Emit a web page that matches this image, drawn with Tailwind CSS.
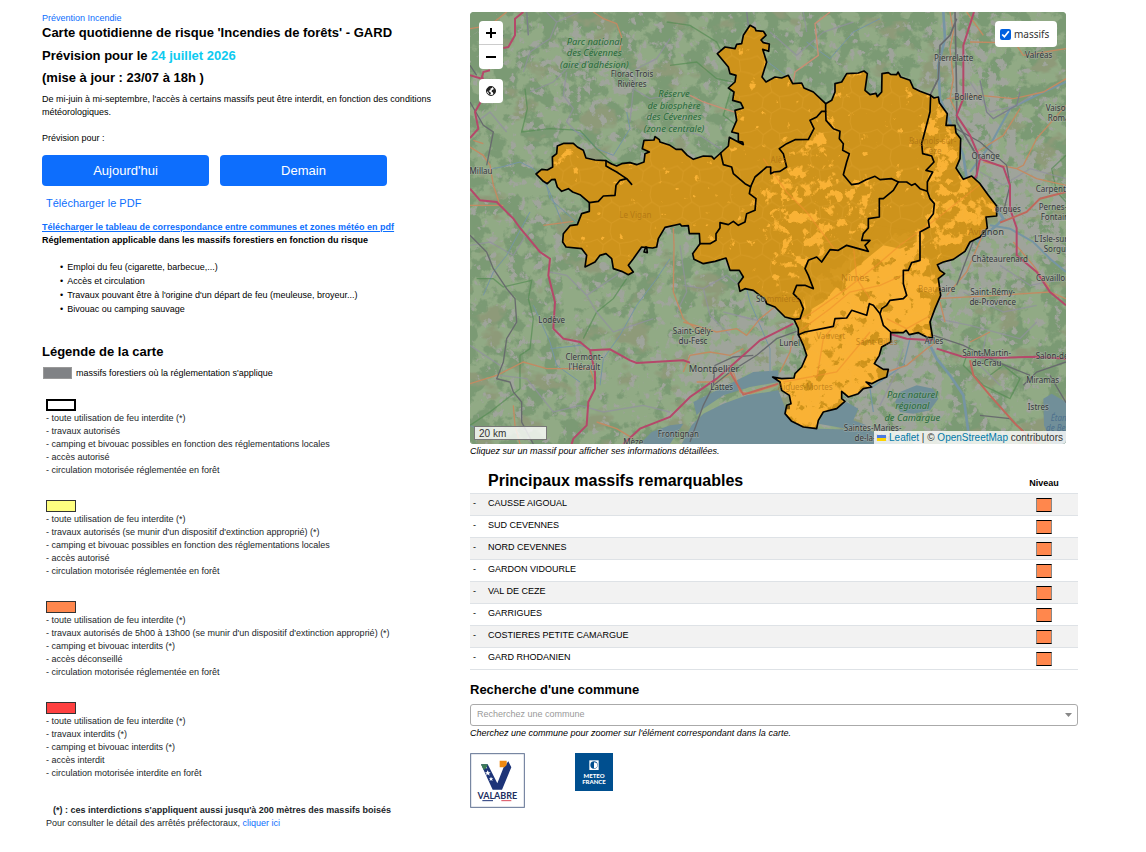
<!doctype html>
<html lang="fr">

<head>
  <meta charset="UTF-8" />
  <meta name="viewport" content="width=device-width,initial-scale=1" />
  <title>Prévention Incendie - GARD</title>
  <script src="https://cdn.jsdelivr.net/npm/@tailwindcss/browser@4"></script>
</head>

<body class="bg-white font-['Liberation_Sans',sans-serif] text-[9px] leading-[13px] text-black">
  <main class="grid grid-cols-[428fr_608fr] pt-3 pr-[68px] pl-[42px]">

    <!-- Left column: forecast, rules and legend -->
    <section class="pr-4">
      <a href="#" class="block text-[#0d6efd]">Prévention Incendie</a>
      <div class="-mt-[3px] text-[13px] leading-[22px] font-bold">
        <h1>Carte quotidienne de risque 'Incendies de forêts' - GARD</h1>
        <h2 class="pt-px">Prévision pour le <span class="text-[#0dcaf0]">24 juillet 2026</span></h2>
        <h2>(mise à jour : 23/07 à 18h )</h2>
      </div>
      <p class="mt-1">De mi-juin à mi-septembre, l'accès à certains massifs peut être interdit, en fonction des conditions météorologiques.</p>
      <p class="mt-[13px]">Prévision pour :</p>
      <div class="mt-[10px] flex gap-[11px]">
        <button type="button" class="h-[31px] w-[167px] rounded bg-[#0d6efd] text-[13px] text-white">Aujourd'hui</button>
        <button type="button" class="h-[31px] w-[167px] rounded bg-[#0d6efd] text-[13px] text-white">Demain</button>
      </div>
      <a href="#" class="mt-2 block pl-1 text-[11px] leading-[18px] text-[#0d6efd]">Télécharger le PDF</a>
      <div class="mt-[9px] font-bold">
        <a href="#" class="text-[#0d6efd] underline">Télécharger le tableau de correspondance entre communes et zones météo en pdf</a>
        <p>Réglementation applicable dans les massifs forestiers en fonction du risque</p>
      </div>
      <ul class="mt-[13px] pl-[18px] leading-[14px]">
        <li class="before:mr-1 before:content-['•']">Emploi du feu (cigarette, barbecue,...)</li>
        <li class="before:mr-1 before:content-['•']">Accès et circulation</li>
        <li class="before:mr-1 before:content-['•']">Travaux pouvant être à l'origine d'un départ de feu (meuleuse, broyeur...)</li>
        <li class="before:mr-1 before:content-['•']">Bivouac ou camping sauvage</li>
      </ul>

      <h3 class="mt-[27px] text-[13px] leading-[18px] font-bold">Légende de la carte</h3>
      <div class="mt-[3px] flex items-center gap-1 leading-[18px]">
        <span class="ml-px h-3 w-[29px] border border-[#999] bg-[#808285]"></span>
        massifs forestiers où la réglementation s'applique
      </div>

      <div class="mt-[17px] space-y-[23px] pl-1 text-[#212529]">
        <div>
          <div class="mb-px h-3 w-[30px] border-2 border-black bg-white"></div>
          <ul>
            <li>- toute utilisation de feu interdite (*)</li>
            <li>- travaux autorisés</li>
            <li>- camping et bivouac possibles en fonction des réglementations locales</li>
            <li>- accès autorisé</li>
            <li>- circulation motorisée réglementée en forêt</li>
          </ul>
        </div>
        <div>
          <div class="mb-px h-3 w-[30px] border border-[#333] bg-[#ffff80]"></div>
          <ul>
            <li>- toute utilisation de feu interdite (*)</li>
            <li>- travaux autorisés (se munir d'un dispositif d'extinction approprié) (*)</li>
            <li>- camping et bivouac possibles en fonction des réglementations locales</li>
            <li>- accès autorisé</li>
            <li>- circulation motorisée réglementée en forêt</li>
          </ul>
        </div>
        <div>
          <div class="mb-px h-3 w-[30px] border border-[#333] bg-[#ff874d]"></div>
          <ul>
            <li>- toute utilisation de feu interdite (*)</li>
            <li>- travaux autorisés de 5h00 à 13h00 (se munir d'un dispositif d'extinction approprié) (*)</li>
            <li>- camping et bivouac interdits (*)</li>
            <li>- accès déconseillé</li>
            <li>- circulation motorisée réglementée en forêt</li>
          </ul>
        </div>
        <div>
          <div class="mb-px h-3 w-[30px] border border-[#333] bg-[#ff4040]"></div>
          <ul>
            <li>- toute utilisation de feu interdite (*)</li>
            <li>- travaux interdits (*)</li>
            <li>- camping et bivouac interdits (*)</li>
            <li>- accès interdit</li>
            <li>- circulation motorisée interdite en forêt</li>
          </ul>
        </div>
      </div>
      <div class="mt-6 pl-1 text-[#212529]">
        <p class="pl-[7px] font-bold">(*) : ces interdictions s'appliquent aussi jusqu'à 200 mètres des massifs boisés</p>
        <p>Pour consulter le détail des arrêtés préfectoraux, <a href="#" class="text-[#0d6efd]">cliquer ici</a></p>
      </div>
    </section>

    <!-- Right column: map, massifs and search -->
    <section>
      <div class="relative mr-3 h-[432px] overflow-hidden rounded bg-[#7f9f7c]">
        <svg class="block h-full w-full" viewBox="0 0 1788 1296" preserveAspectRatio="xMidYMid slice" role="img" aria-label="Carte des massifs du Gard">
          <defs>
            <!-- each filter turns noise plus the source alpha into patches of one colour -->
            <filter id="fields" x="0" y="0" width="100%" height="100%" color-interpolation-filters="sRGB">
              <feTurbulence type="fractalNoise" baseFrequency="0.018" numOctaves="5" seed="4" result="n" />
              <feGaussianBlur in="SourceAlpha" stdDeviation="30" result="s" />
              <feComposite in="s" in2="n" operator="arithmetic" k2="1" k3="1" result="m" />
              <feComponentTransfer in="m" result="t"><feFuncA type="linear" slope="10" intercept="-6" /></feComponentTransfer>
              <feFlood flood-color="#91aa85" />
              <feComposite in2="t" operator="in" />
            </filter>
            <filter id="bare" x="0" y="0" width="100%" height="100%" color-interpolation-filters="sRGB">
              <feTurbulence type="fractalNoise" baseFrequency="0.036" numOctaves="5" seed="23" result="n" />
              <feGaussianBlur in="SourceAlpha" stdDeviation="45" result="s" />
              <feComposite in="s" in2="n" operator="arithmetic" k2="1" k3="1" result="m" />
              <feComponentTransfer in="m" result="t"><feFuncA type="linear" slope="9" intercept="-6.9" /></feComponentTransfer>
              <feFlood flood-color="#9fa49b" />
              <feComposite in2="t" operator="in" />
            </filter>
            <filter id="heath" x="0" y="0" width="100%" height="100%" color-interpolation-filters="sRGB">
              <feTurbulence type="fractalNoise" baseFrequency="0.009 0.014" numOctaves="4" seed="9" result="n" />
              <feComponentTransfer in="n" result="t"><feFuncA type="linear" slope="8" intercept="-4.800" /></feComponentTransfer>
              <feFlood flood-color="#8e9a79" />
              <feComposite in2="t" operator="in" />
            </filter>
            <filter id="open" x="0" y="0" width="100%" height="100%" color-interpolation-filters="sRGB">
              <feTurbulence type="fractalNoise" baseFrequency="0.03" numOctaves="5" seed="31" result="n" />
              <feGaussianBlur in="SourceAlpha" stdDeviation="14" result="s" />
              <feComposite in="s" in2="n" operator="arithmetic" k2="1" k3="1" result="m" />
              <feComponentTransfer in="m" result="t"><feFuncA type="linear" slope="12" intercept="-9.1" /></feComponentTransfer>
              <feFlood flood-color="#f9b235" />
              <feComposite in2="t" operator="in" />
            </filter>
            <pattern id="communes" width="120" height="110" patternUnits="userSpaceOnUse">
              <path d="M0 30L22 22L40 38L66 20L88 34L120 30M40 38L36 66L12 80L0 74M36 66L64 84L92 68L88 34M92 68L120 74M64 84L60 110M66 20L60 0" fill="none" stroke="#f0b040" stroke-opacity=".22" stroke-width="3" />
            </pattern>
            <path id="gard" d="M198 486L215 472L232 474L248 465L247 435L260 425L262 402L282 394L310 394L322 405L340 415L348 438L375 444L408 446L425 456L440 462L455 455L480 452L500 458L522 450L525 425L538 420L517 410L522 385L552 384L555 374L568 383L570 390L600 400L618 412L635 412L652 430L670 442L700 432L725 433L732 441L752 423L775 402L778 376L820 398L818 390L805 388L805 365L785 360L800 325L795 295L820 288L812 272L788 265L792 240L775 228L795 210L798 190L780 185L775 165L742 125L765 105L795 110L800 97L815 95L820 70L840 40L855 48L858 56L880 58L888 70L873 84L880 92L898 96L896 118L878 112L890 150L876 195L888 210L915 195L935 198L955 190L968 215L995 213L1002 228L1030 240L1067 275L1085 265L1095 240L1095 215L1115 210L1130 185L1165 183L1182 177L1192 185L1185 235L1200 248L1218 244L1222 254L1235 240L1236 185L1255 182L1262 187L1280 188L1284 180L1292 195L1320 205L1330 228L1350 238L1382 250L1392 258L1405 255L1408 272L1432 305L1428 340L1455 340L1458 362L1472 380L1470 440L1458 468L1480 502L1505 492L1530 515L1555 550L1580 582L1580 612L1548 615L1552 648L1530 675L1500 690L1485 718L1450 742L1420 750L1402 758L1410 775L1424 785L1405 800L1412 850L1395 890L1380 930L1388 978L1370 975L1345 962L1318 968L1308 955L1300 962L1262 962L1262 990L1235 1005L1228 1030L1213 1055L1240 1072L1255 1072L1250 1095L1225 1105L1205 1115L1188 1110L1205 1125L1180 1130L1165 1145L1135 1155L1115 1138L1115 1160L1125 1168L1100 1190L1060 1200L1045 1225L1040 1250L1000 1245L965 1228L945 1205L950 1180L963 1175L958 1150L935 1135L930 1110L908 1095L935 1100L972 1098L975 1085L995 1065L1010 1030L1000 1000L985 968L985 950L972 922L945 915L915 885L890 875L885 862L850 835L825 830L810 838L805 815L820 795L808 775L780 775L768 738L735 748L700 755L672 742L668 725L690 695L688 665L658 665L655 641L635 642L630 636L585 646L565 680L560 705L548 708L515 705L490 740L475 760L490 780L475 788L455 778L430 770L425 740L408 725L390 730L375 750L345 765L350 730L335 710L288 705L278 690L280 665L300 641L322 638L335 605L358 598L358 572L330 548L308 540L295 530L275 538L262 525L255 502L245 503L232 515L220 508Z" />
            <clipPath id="inside"><use href="#gard" /></clipPath>
          </defs>

          <!-- land cover -->
          <rect width="1788" height="1296" fill="#7b9a74" />
          <g filter="url(#fields)"><rect width="1788" height="1296" fill-opacity=".14" /><path d="M0 300H1788V1296H0Z" fill-opacity=".05" /><path d="M350 900L1000 900V1100L350 1296Z" fill-opacity=".1" /></g>
          <rect width="1788" height="1296" filter="url(#heath)" />
          <g filter="url(#bare)">
            <rect width="1788" height="1296" fill-opacity=".16" />
            <path d="M180 60L560 60L480 300L200 260Z" fill-opacity=".12" />
            <path d="M1390 0L1500 0L1620 400L1788 440V800L1650 780L1420 920L1400 1296H1100L1200 960L1440 760L1600 600L1470 450Z" fill-opacity=".3" />
            <path d="M640 980L850 880L990 940V1080L760 1120L640 1180Z" fill-opacity=".3" />
          </g>

          <!-- sea and ponds -->
          <g fill="#718f99">
            <path d="M635 1296L665 1240L700 1205L760 1175L830 1150L925 1135L960 1225L1045 1250L1200 1255L1280 1296Z" />
            <path d="M670 1170L730 1140L790 1110L850 1080L925 1075L925 1110L840 1125L760 1150L700 1190L680 1210Z" />
            <path d="M510 1296L545 1260L600 1240L640 1235L600 1296Z" />
            <path d="M1045 1235L1060 1205L1130 1170L1165 1190L1150 1225L1190 1240L1130 1250Z" />
            <path d="M1275 1170L1290 1140L1340 1120L1390 1130L1405 1160L1380 1195L1330 1205L1290 1200Z" />
            <path d="M1720 1160L1745 1145L1788 1170V1296H1745L1722 1240Z" />
          </g>

          <!-- rivers -->
          <g fill="none" stroke="#7695a4" stroke-width="5">
            <path d="M0 480L90 466L150 450L190 470L235 530L280 640" stroke-width="3" />
            <path d="M345 370L380 410L430 430L480 350L470 300M300 350L345 370" stroke-width="3" />
            <path d="M40 850L70 780L110 730L180 600M600 740L560 800L500 880L450 970L400 1040L390 1120" stroke-width="3" />
            <path d="M1420 0L1425 80L1405 160L1410 260L1440 330L1480 430L1490 500L1560 560L1600 620L1580 640L1520 690" stroke-width="8" />
            <path d="M1788 210L1700 250L1620 290L1560 400L1500 480M1788 780L1740 740L1690 690L1620 650L1560 640" stroke-width="6" />
            <path d="M1370 980L1400 1040L1440 1090L1480 1150L1500 1296" stroke-width="8" />
            <path d="M1340 900L1300 1060L1200 1130L1210 1200" stroke-width="4" />
            <path d="M1010 90L1080 140L1150 60L1230 20M880 140L960 200M220 480L240 560L330 640" stroke-width="3" />
            <path d="M190 880L240 990L260 1060L330 1110M240 1010L330 1000L360 1010" stroke-width="3" />
            <path d="M820 790L840 870L900 1010L900 1080M0 1240L60 1270" stroke-width="3" />
          </g>

          <!-- park limits -->
          <g fill="none" stroke="#528a50" stroke-opacity=".65" stroke-width="4">
            <path d="M165 230L172 290L155 360L240 350L330 355L380 410L430 455L480 450" />
            <path d="M20 800L70 800L100 825L185 805L175 860L190 920L180 1010L150 1030L150 1130L60 1200L0 1240" />
            <path d="M340 980L380 900L430 860L470 800" />
            <path d="M590 30L660 40L740 90L770 150M600 160L680 150L740 200L790 210L760 310L800 340" />
            <path d="M1788 430L1745 470L1760 540L1788 570M1500 1000L1480 1060L1540 1120L1620 1160L1650 1100L1600 1060L1560 1090" />
          </g>

          <!-- minor roads -->
          <g fill="none" stroke="#9290a0" stroke-opacity=".7" stroke-width="4">
            <path d="M230 0L260 30L240 80L180 120L160 180M260 30L330 0M180 240L250 210L300 160L350 150M290 180L280 250L310 290L290 330L340 380" />
            <path d="M600 80L560 140L500 170L490 230L480 330M490 230L540 260L600 250M110 360L60 300L20 330" />
            <path d="M0 700L60 690L130 730L180 650M240 780L290 790L350 850L440 790L540 690M350 850L380 900L430 960L550 920" />
            <path d="M90 1090L170 1100L250 1200L330 1180L400 1200L520 1180L600 1200M0 1000L90 1060" />
            <path d="M640 820L700 830L770 790L820 830M700 830L720 910L780 970M760 900L880 930M620 900L650 840L630 700" />
            <path d="M900 60L980 130L1060 60L1150 30M600 340L690 370L750 410M1000 0L1010 60" />
            <path d="M1500 210L1560 300L1640 280L1700 240M1530 480L1600 520L1680 470L1788 500M1590 760L1680 820L1788 800M1480 840L1600 900L1700 880" />
            <path d="M1300 1010L1270 1100L1230 1180M1400 920L1500 940L1650 980L1700 930M1550 960L1530 1060L1590 1120" />
          </g>

          <!-- main roads -->
          <g fill="none" stroke="#c38a62" stroke-width="4">
            <path d="M370 0L400 20L440 35L455 75L450 120M0 50L60 40L110 0M0 405L40 430L60 460L70 520L90 580M10 385L40 395M0 580L100 580M220 640L310 628" />
            <path d="M0 1115L80 1090L160 1050L230 1070L360 1070L375 1110M330 650L430 640M380 1230L440 1250L490 1280M130 1180L135 1240L150 1296" />
            <path d="M610 648L612 700L610 840L640 920L700 970M640 930L740 960L800 950L830 970L870 920L920 880M640 1080L660 1030L720 1020L780 1030L820 1010M680 1110L740 1110L790 1080L810 1140L840 1145L920 1120M930 1080L960 1020L970 970" />
            <path d="M660 250L700 270L760 290L800 302M970 210L975 180L1045 130L1035 35L1080 0" stroke="#c98d74" />
            <path d="M1440 0L1450 60L1440 110L1450 200L1440 260L1460 300M1500 90L1600 92L1640 100L1660 130L1788 110M1540 70L1490 0M1430 260L1530 250L1630 260L1720 240L1788 200M1600 370L1650 290M1520 420L1600 370" />
            <path d="M1640 470L1660 460L1700 380L1788 280M1540 450L1640 470L1700 500L1788 520M1430 850L1490 780L1550 640M1400 860L1580 850L1740 840L1788 860M1250 1080L1310 1060L1370 1010L1400 990" />
            <path d="M1630 690L1690 760L1740 830M1410 870L1425 930M1250 960L1280 930M1560 960L1500 990" />
          </g>
          <g fill="none" stroke="#686b6e" stroke-width="5">
            <path d="M0 160L20 190M0 270L40 340L70 360L50 460M100 70L90 80M0 670L50 720L70 770L110 830L135 860L140 930L110 980L100 1050L80 1100L120 1110L130 1140L155 1170L155 1230L190 1296" stroke-width="4" />
            <path d="M1455 0L1460 250L1460 330L1520 430L1520 500M1460 20L1440 70L1410 100L1405 200L1380 250" />
            <path d="M1440 340L1530 390L1610 460L1620 520L1600 600" stroke-width="4" />
            <path d="M660 1290L700 1180L730 1120L780 1080L860 1030L920 980L980 958M730 1120L735 1060L790 1035L850 1030" stroke-width="4" />
            <path d="M1390 970L1480 1000L1570 1045L1680 1090M1460 820L1520 660M1660 1120L1700 1080L1788 1050M1530 1210L1620 1220L1700 1296M1788 1172L1740 1090" stroke-width="4" />
            <path d="M170 0L175 70M830 0L835 40M1530 205L1550 300L1570 320L1640 280L1650 240" stroke="#7c7f8a" stroke-width="4" />
          </g>

          <!-- motorways -->
          <g fill="none" stroke="#b5486a" stroke-width="6">
            <path d="M160 0L135 20L135 70L115 105L100 108M60 175L40 180L35 200L0 190M35 190L40 205M35 265L15 300L25 350L0 378M0 530L30 565L80 570L130 620L150 648L210 720L240 740L235 790L255 870L250 950L280 980L330 990L360 1015L375 1080L375 1130L355 1170L350 1240L310 1280L305 1296" />
            <path d="M360 1015L420 1012L480 1045L500 1053L600 1047L640 1045L660 1052M460 1296L510 1250L600 1215L660 1155L740 1100L820 1030L870 985L970 935" />
            <path d="M1512 0L1480 100L1480 260L1460 310L1500 370L1530 440L1600 465L1620 520L1620 590L1640 648V730L1700 780L1740 840L1788 880" />
            <path d="M1530 440L1520 490L1490 530M1240 960L1310 980L1390 985M1400 1010L1480 1035L1600 1037L1700 1034L1788 1040" />
          </g>
          <g fill="none" stroke="#c0685c" stroke-width="6">
            <path d="M1500 1045L1510 1090L1560 1150L1640 1240L1700 1296M1590 632L1670 600L1710 560L1788 540M780 1080L820 1148L925 1115" />
          </g>

          <!-- massifs -->
          <g clip-path="url(#inside)">
            <rect width="1788" height="1296" fill="#ce931b" />
            <g filter="url(#open)">
              <rect width="1788" height="1296" fill-opacity=".04" />
              <path d="M255 410H320V450H230L205 500H180L240 470Z" fill-opacity=".2" />
              <path d="M1070 280L1130 180L1180 180L1140 240L1060 300L1030 380L950 400L950 470L850 500L860 600L940 720L880 800L960 820L1080 710L1190 640L1230 560L1270 510L1120 500L1080 360Z" fill-opacity=".2" />
              <path d="M1380 250L1410 255L1470 370L1460 470L1590 600L1540 660L1360 760L1380 540L1350 390Z" fill-opacity=".26" />
              <path d="M1000 830L1220 690L1340 640L1340 760L1400 760L1390 980H1270L1240 1080L1040 1260L940 1220L900 1090L1000 1060Z" fill-opacity=".42" />
            </g>
            <g fill="#ce931b" fill-opacity=".85">
              <path d="M1220 640L1340 660V690L1290 710L1240 700L1190 740L1130 790L1060 870L1010 900L1000 850L970 840L1020 825L1010 750L1100 710L1180 700Z" />
              <path d="M1410 730L1530 670L1500 690L1440 750L1410 765L1420 785L1370 790Z" />
            </g>
            <path d="M950 1180h10v12h-10z" fill="#7c5b14" />
            <rect width="1788" height="1296" fill="url(#communes)" />
            <g fill="none" stroke="#ef8f2d" stroke-opacity=".6" stroke-width="4">
              <path d="M970 935L1030 900L1130 830L1220 760L1290 700L1400 620L1540 510M985 960L1080 890L1140 840L1230 820L1320 780M880 440L950 540L1010 600L1100 720M1150 700L1160 800L1200 860M1040 1100L1060 980L1110 920M940 1110L1100 1080L1200 960M1250 920L1310 950L1400 900" />
            </g>
          </g>
          <g fill="none" stroke="#000" stroke-width="5" stroke-linejoin="round" stroke-linecap="round">
            <use href="#gard" />
            <path d="M358 572L385 568L400 552L435 550L438 520L450 505L470 500L485 517L470 500L455 490L440 480L425 472L408 462V446" />
            <path d="M752 423L760 458L785 465L790 485L825 515L842 524L838 545L858 560L855 595L830 605L825 630L805 640L790 628L775 638L750 632L750 648L738 665L738 685L720 695H690" />
            <path d="M842 524L855 495L890 465L902 465L902 485L912 480L930 478L950 465L940 425L928 410L950 395L975 383L1015 382L1032 350L1020 325L1040 315L1055 298L1067 298V275" />
            <path d="M1067 298L1068 325L1090 350L1110 358L1108 380L1120 395L1118 415L1138 425L1130 450L1120 488L1145 518L1165 515L1188 503L1215 493L1230 503L1265 500L1285 510L1310 510L1325 520L1335 515L1350 530L1372 538" />
            <path d="M1382 250L1380 300L1355 395L1358 425L1385 432L1392 450L1368 475L1388 480L1372 510V538L1380 560L1393 575L1390 605L1375 625L1378 645L1350 660V745L1325 752L1315 775L1300 775V815L1310 850L1300 860L1260 865L1250 880L1235 890L1230 905L1240 940L1262 960" />
            <path d="M1285 510L1270 535L1240 560L1228 560V615L1195 620V648L1180 665L1175 685L1200 685L1185 700L1195 718L1130 700L1105 715L1080 713L1055 750L1040 735L1015 745L1005 770L1015 790L1030 830L1005 820H980L970 845L990 865L1000 890L990 920L972 922" />
            <path d="M985 968L1005 960L1090 943L1095 920L1130 918L1145 895L1190 910L1198 875L1210 880L1230 905" />
            <path d="M527 705L522 720L532 722L530 705" />
          </g>

          <!-- place names -->
          <g font-family="'Noto Sans', sans-serif" font-size="24" fill="#34373a" stroke="#b3b8b0" stroke-opacity=".5" stroke-width="4" paint-order="stroke" text-anchor="middle">
            <text x="33" y="485">Millau</text>
            <text x="486" y="196">Florac Trois</text><text x="486" y="226">Rivières</text>
            <text x="245" y="934">Lodève</text>
            <text x="343" y="1044">Clermont-</text><text x="343" y="1074">l'Hérault</text>
            <text x="490" y="1300">Mèze</text>
            <text x="625" y="1274">Frontignan</text>
            <text x="669" y="967">Saint-Gély-</text><text x="669" y="997">du-Fesc</text>
            <text x="732" y="1080" font-size="28">Montpellier</text>
            <text x="755" y="1133">Lattes</text>
            <text x="1451" y="146">Pierrelatte</text>
            <text x="1706" y="137">Valréas</text>
            <text x="1495" y="265">Bollène</text>
            <text x="1727" y="298" text-anchor="start">Vaison-la-</text><text x="1733" y="328" text-anchor="start">Romaine</text>
            <text x="1547" y="440">Orange</text>
            <text x="1697" y="540" text-anchor="start">Carpentras</text>
            <text x="1706" y="593" text-anchor="start">Pernes-les-</text><text x="1712" y="624" text-anchor="start">Fontaines</text>
            <text x="1693" y="690" text-anchor="start">L'Isle-sur-la-</text><text x="1721" y="721" text-anchor="start">Sorgue</text>
            <text x="1589" y="751">Châteaurenard</text>
            <text x="1698" y="807" text-anchor="start">Cavaillon</text>
            <text x="1568" y="849">Saint-Rémy-</text><text x="1568" y="879">de-Provence</text>
            <text x="1392" y="997">Arles</text>
            <text x="1550" y="1031">Saint-Martin-</text><text x="1550" y="1061">de-Crau</text>
            <text x="1697" y="1042" text-anchor="start">Salon-de-</text>
            <text x="1718" y="1112">Miramas</text>
            <text x="1705" y="1195">Istres</text>
            <text x="1208" y="1256">Saintes-Maries-</text><text x="1208" y="1286">de-la-Mer</text>
            <text x="1574" y="599" text-anchor="start">orgues</text>
            <text x="1533" y="670" font-size="28" text-anchor="start">gnon</text>
            <text x="1413" y="839" text-anchor="start">aire</text>
            <text x="858" y="870" text-anchor="start">So</text>
            <text x="928" y="1001" text-anchor="start">Lunel</text>
          </g>
          <g font-family="'Noto Sans', sans-serif" font-size="24" fill="#a3680f" fill-opacity=".6" text-anchor="middle">
            <text x="496" y="618">Le Vigan</text>
            <text x="925" y="452">Alès</text>
            <text x="1388" y="397">Bagnols-sur-</text><text x="1388" y="427">Cèze</text>
            <text x="890" y="870" text-anchor="start">mmières</text>
            <text x="1155" y="806" font-size="28">Nîmes</text>
            <text x="1082" y="981">Vauvert</text>
            <text x="1220" y="999">Saint-Gilles</text>
            <text x="1006" y="1133">Aigues-Mortes</text>
            <text x="1413" y="839" text-anchor="end">Beauc</text>
            <text x="1533" y="670" font-size="28" text-anchor="end">Avi</text>
          </g>
          <g font-family="'Noto Sans', sans-serif" font-size="28" font-style="italic" fill="#27683a" stroke="#9ab894" stroke-opacity=".4" stroke-width="4" paint-order="stroke" text-anchor="middle">
            <text x="373" y="99">Parc national</text><text x="373" y="133">des Cévennes</text><text x="373" y="167">(aire d'adhésion)</text>
            <text x="612" y="256">Réserve</text><text x="612" y="290">de biosphère</text><text x="612" y="325">des Cévennes</text><text x="612" y="359">(zone centrale)</text>
            <text x="1327" y="1157">Parc naturel</text><text x="1327" y="1191">régional</text><text x="1327" y="1226">de Camargue</text>
          </g>
          <g font-family="'Noto Sans', sans-serif" font-size="24" font-style="italic" fill="#4d6f8d">
            <text x="1742" y="1227">Étang</text><text x="1728" y="1256">de Berre</text>
          </g>
        </svg>

        <div class="absolute top-[9px] left-[9px] flex w-6 flex-col overflow-hidden rounded-sm bg-white">
          <button type="button" aria-label="Zoom avant" class="flex h-6 items-center justify-center border-b border-[#ccc]">
            <svg class="size-3" viewBox="0 0 12 12" stroke="#000" stroke-width="2"><path d="M1 6H11M6 1V11" /></svg>
          </button>
          <button type="button" aria-label="Zoom arrière" class="flex h-6 items-center justify-center">
            <svg class="size-3" viewBox="0 0 12 12" stroke="#000" stroke-width="2"><path d="M1 6H11" /></svg>
          </button>
        </div>
        <button type="button" aria-label="Vue initiale" class="absolute top-[67px] left-[9px] flex size-6 items-center justify-center rounded-sm bg-white">
          <svg class="size-[10px]" viewBox="0 0 20 20">
            <circle cx="10" cy="10" r="9" fill="#fff" stroke="#222" stroke-width="2" />
            <path d="M2 5L6 1L13 1L12 4L9 5L9 8L5 10L8 12L10 14L8 18L6 17L5 13L1 9ZM15 3L19 8L18 14L15 17L14 13L11 11L12 8L15 7Z" fill="#222" />
          </svg>
        </button>
        <label class="absolute top-[9px] right-[9px] flex h-[26px] w-[62px] items-center gap-[3px] rounded bg-white pl-[5px] font-['Noto_Sans',sans-serif] text-[10px] text-[#333]">
          <input type="checkbox" checked class="size-[11px] accent-[#0060df]" />massifs
        </label>
        <div class="absolute bottom-1 left-1 h-[14px] w-[73px] border border-[#777] bg-white/80 pl-1 text-[10px] leading-[14px] text-[#333]">20 km</div>
        <div class="absolute right-0 bottom-0 flex h-[13px] items-center bg-white/80 px-[3px] text-[10px] whitespace-pre text-[#333]"><svg class="mr-[3px] h-[6px] w-[9px]" viewBox="0 0 12 8"><path fill="#4c7be1" d="M0 0h12v4H0z" /><path fill="#ffd500" d="M0 4h12v4H0z" /></svg><a href="#" class="text-[#0078a8]">Leaflet</a> | © <a href="#" class="text-[#0078a8]">OpenStreetMap</a> contributors</div>
      </div>
      <p class="mt-px italic">Cliquez sur un massif pour afficher ses informations détaillées.</p>

      <table class="mt-[11px] w-full border-collapse">
        <thead>
          <tr class="h-6 border-b border-[#dee2e6]">
            <th class="w-[18px]"></th>
            <th class="text-left text-[16px] leading-[22px]">Principaux massifs remarquables</th>
            <th class="w-[68px] pt-[6px]">Niveau</th>
          </tr>
        </thead>
        <tbody id="massifs"></tbody>
      </table>

      <label for="commune" class="mt-[11px] block text-[13px] leading-[18px] font-bold">Recherche d'une commune</label>
      <div class="relative mt-[5px]">
        <select id="commune" class="block h-[22px] w-full appearance-none rounded-[3px] border border-[#aaa] bg-white px-[6px] text-[9px] text-[#999]">
          <option>Recherchez une commune</option>
        </select>
        <svg class="pointer-events-none absolute top-[9px] right-[6px] h-1 w-[7px]" viewBox="0 0 7 4"><path d="M0 0H7L3.500 4Z" fill="#888" /></svg>
      </div>
      <p class="mt-px italic">Cherchez une commune pour zoomer sur l'élément correspondant dans la carte.</p>

      <div class="mt-[13px] flex items-start gap-[50px]">
        <a href="#" aria-label="Valabre">
          <svg class="h-[55px] w-[55px]" viewBox="0 0 165 165">
            <rect x="2" y="2" width="161" height="161" fill="#fff" stroke="#5f7091" stroke-width="3" />
            <path d="M33 34H53L82 91L101 43L115 25L124 43L96 110H68Z" fill="#1d3478" />
            <path d="M33 34H53L50 44L41 51Z" fill="#3d7c56" />
            <path d="M89 23H110V36L103 43H89Z" fill="#f08a12" />
            <path d="M50 58l3-6 3 6 6 0-5 4 2 6-6-4-5 4 2-6-5-4zM61 76l2-5 2 5 5 0-4 3 2 5-5-3-4 3 1-5-3-3zM48 46l2-4 2 4z" fill="#fff" />
            <text x="82" y="138" text-anchor="middle" font-family="Lato, sans-serif" font-weight="700" font-size="27" fill="#1d2f5f">VALABRE</text>
            <path d="M37 143H69" stroke="#1d3478" stroke-width="3" /><path d="M94 143H124" stroke="#d94a5a" stroke-width="3" />
          </svg>
        </a>
        <a href="#" aria-label="Météo France">
          <svg class="h-[38px] w-[38px]" viewBox="0 0 114 114">
            <rect width="114" height="114" fill="#004f8f" />
            <rect x="43" y="22" width="28" height="29" fill="#fff" />
            <circle cx="57" cy="36" r="11" fill="#004f8f" /><path d="M57 28A10 9 0 0 1 57 46Z" fill="#fff" />
            <g font-family="Lato, sans-serif" font-weight="900" font-size="18" fill="#fff" text-anchor="middle">
              <text x="57" y="74">METEO</text><text x="57" y="92">FRANCE</text>
            </g>
          </svg>
        </a>
      </div>
    </section>
  </main>
</body>
<script>
  const massifs = [
    "CAUSSE AIGOUAL",
    "SUD CEVENNES",
    "NORD CEVENNES",
    "GARDON VIDOURLE",
    "VAL DE CEZE",
    "GARRIGUES",
    "COSTIERES PETITE CAMARGUE",
    "GARD RHODANIEN"
  ];

  document.getElementById("massifs").innerHTML = massifs.map((name) => `
    <tr class="h-[22px] border-b border-[#dee2e6] odd:bg-[#f2f2f2]">
      <td class="pb-[2px] pl-[3px]">-</td>
      <td class="pb-[2px]">${name}</td>
      <td><div class="mx-auto mt-[2px] h-[14px] w-4 border border-x-[#888] border-y-black bg-[#ff874d]"></div></td>
    </tr>`).join("");
</script>

</html>
